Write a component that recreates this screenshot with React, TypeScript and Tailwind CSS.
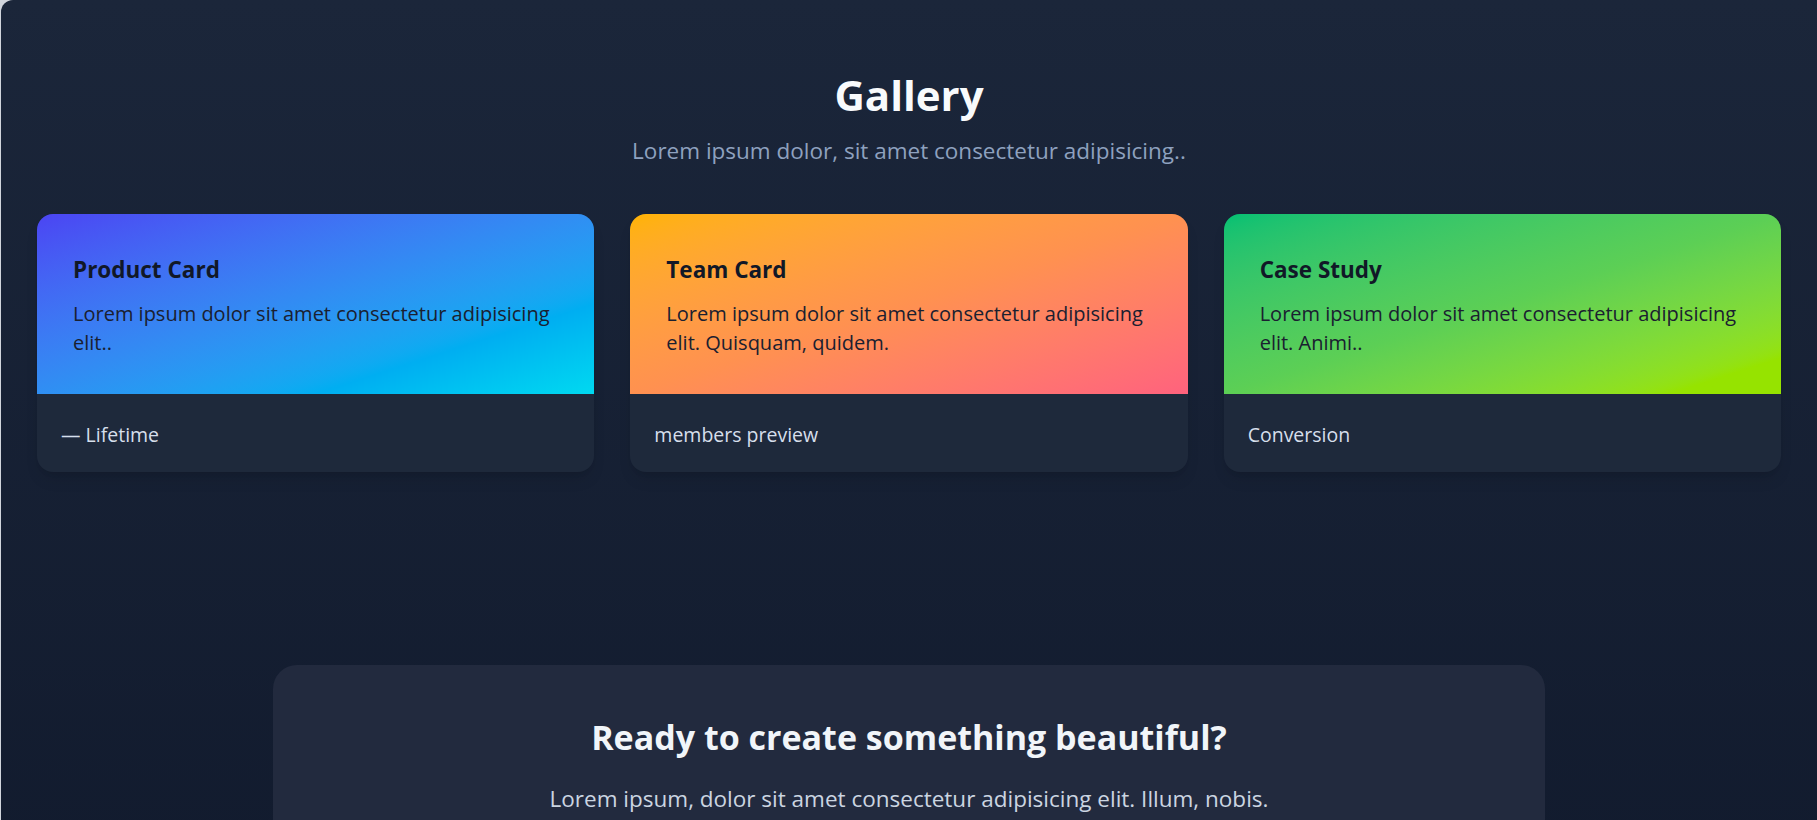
import React from "react";

const cards = [
  {
    title: "Product Card",
    text: "Lorem ipsum dolor sit amet consectetur adipisicing elit..",
    footer: "— Lifetime",
    bg: "bg-gradient-to-br from-[#4b44f3] via-[#00aef1] via-75% to-[#00d9f0]",
  },
  {
    title: "Team Card",
    text: "Lorem ipsum dolor sit amet consectetur adipisicing elit. Quisquam, quidem.",
    footer: "members preview",
    bg: "bg-gradient-to-br from-[#ffb300] via-[#ff9150] to-[#ff627d]",
  },
  {
    title: "Case Study",
    text: "Lorem ipsum dolor sit amet consectetur adipisicing elit. Animi..",
    footer: "Conversion",
    bg: "bg-gradient-to-br from-[#00c073] via-[#5ccf55] to-[#96e300] to-90%",
  },
];

export default function App() {
  return (
    <div
      className="min-h-screen bg-gray-300 pl-px"
      style={{ fontFamily: '"Open Sans", "Noto Sans", sans-serif' }}
    >
      <div className="min-h-screen overflow-hidden rounded-tl-[12px] bg-gradient-to-b from-[#1b263a] to-[#111a2d] px-9 pb-16">
        <header className="pt-[66px] text-center">
          <h1 className="text-[42px] font-bold leading-[58px] text-[#f8fafc]">Gallery</h1>
          <p className="mt-[11px] text-[22.5px] leading-8 text-[#8ea1bf]">
            Lorem ipsum dolor, sit amet consectetur adipisicing..
          </p>
        </header>

        <div className="mt-[47px] grid grid-cols-3 gap-9">
          {cards.map((c) => (
            <div key={c.title} className="overflow-hidden rounded-2xl bg-[#1e293b] shadow-lg">
              <div className={`h-[180px] px-9 pt-[42px] ${c.bg}`}>
                <h3 className="text-[22.5px] font-bold leading-7 text-[#111827]">{c.title}</h3>
                <p className="mt-[15px] text-[20px] leading-[29px] text-[#1a2030]">{c.text}</p>
              </div>
              <div className="flex h-[78px] items-center px-6 pt-1 text-[19.5px] text-[#d6dfeb]">
                {c.footer}
              </div>
            </div>
          ))}
        </div>

        <section className="mx-auto mt-[193px] max-w-[1272px] rounded-3xl bg-[#222a3e] px-10 pb-16 pt-[50px] text-center">
          <h2 className="text-[34px] font-bold leading-[44px] text-[#f1f5f9]">
            Ready to create something beautiful?
          </h2>
          <p className="mt-[24px] text-[22.5px] leading-8 text-[#cbd5e1]">
            Lorem ipsum, dolor sit amet consectetur adipisicing elit. Illum, nobis.
          </p>
        </section>
      </div>
    </div>
  );
}
